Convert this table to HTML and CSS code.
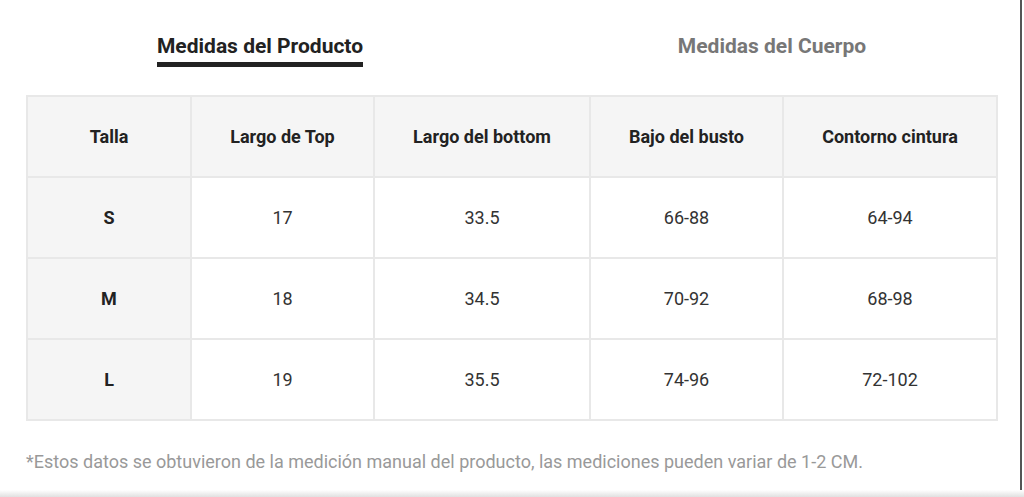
FILE: index.html
```html
<!DOCTYPE html>
<html lang="es">
<head>
<meta charset="utf-8">
<title>Medidas</title>
<link rel="stylesheet" href="styles.css">
</head>
<body>
<div class="page">
  <div class="tabs">
    <div class="tab active"><span class="tab-label">Medidas del Producto</span></div>
    <div class="tab"><span class="tab-label">Medidas del Cuerpo</span></div>
  </div>
  <table class="sizes">
    <colgroup>
      <col style="width:164px"><col style="width:183px"><col style="width:216px"><col style="width:193px"><col style="width:214px">
    </colgroup>
    <thead>
      <tr><th>Talla</th><th>Largo de Top</th><th>Largo del bottom</th><th>Bajo del busto</th><th>Contorno cintura</th></tr>
    </thead>
    <tbody>
      <tr><th>S</th><td>17</td><td>33.5</td><td>66-88</td><td>64-94</td></tr>
      <tr><th>M</th><td>18</td><td>34.5</td><td>70-92</td><td>68-98</td></tr>
      <tr><th>L</th><td>19</td><td>35.5</td><td>74-96</td><td>72-102</td></tr>
    </tbody>
  </table>
  <p class="note">*Estos datos se obtuvieron de la medición manual del producto, las mediciones pueden variar de 1-2 CM.</p>
</div>
</body>
</html>
```
FILE: styles.css
```css
html, body {
  margin: 0;
  padding: 0;
  background: #fff;
  height: 497px;
  overflow: hidden;
}
body {
  font-family: Roboto, "Liberation Sans", sans-serif;
  color: #222;
  position: relative;
}
body::after {
  content: "";
  position: absolute;
  left: 0;
  right: 0;
  bottom: 0;
  height: 7px;
  background: linear-gradient(#ffffff, #e0e0e0);
}
.page {
  width: 1022px;
  height: 497px;
  border-right: 2px solid #555;
  box-sizing: border-box;
  overflow: hidden;
}
.tabs {
  display: flex;
  width: 1024px;
  margin-left: 4px;
  padding-top: 34px;
  height: 67px;
  box-sizing: border-box;
}
.tab {
  flex: 1;
  display: flex;
  justify-content: center;
  align-items: flex-start;
}
.tab-label {
  font-size: 21px;
  font-weight: 700;
  color: #777;
  line-height: 25px;
  padding-bottom: 3px;
}
.tab.active .tab-label {
  color: #222;
  border-bottom: 5px solid #222;
}
.sizes {
  margin: 28px 0 0 26px;
  width: 970px;
  border-collapse: collapse;
  table-layout: fixed;
}
.sizes th, .sizes td {
  border: 2px solid #e8e8e8;
  height: 79px;
  padding: 0;
  text-align: center;
  font-size: 18px;
}
.sizes thead th {
  background: #f5f5f5;
  font-weight: 700;
  color: #222;
}
.sizes tbody th {
  background: #f5f5f5;
  font-weight: 700;
  color: #222;
}
.sizes td {
  color: #333;
  font-weight: 400;
}
.note {
  margin: 30px 0 0 26px;
  font-size: 18px;
  color: #999;
}
```
